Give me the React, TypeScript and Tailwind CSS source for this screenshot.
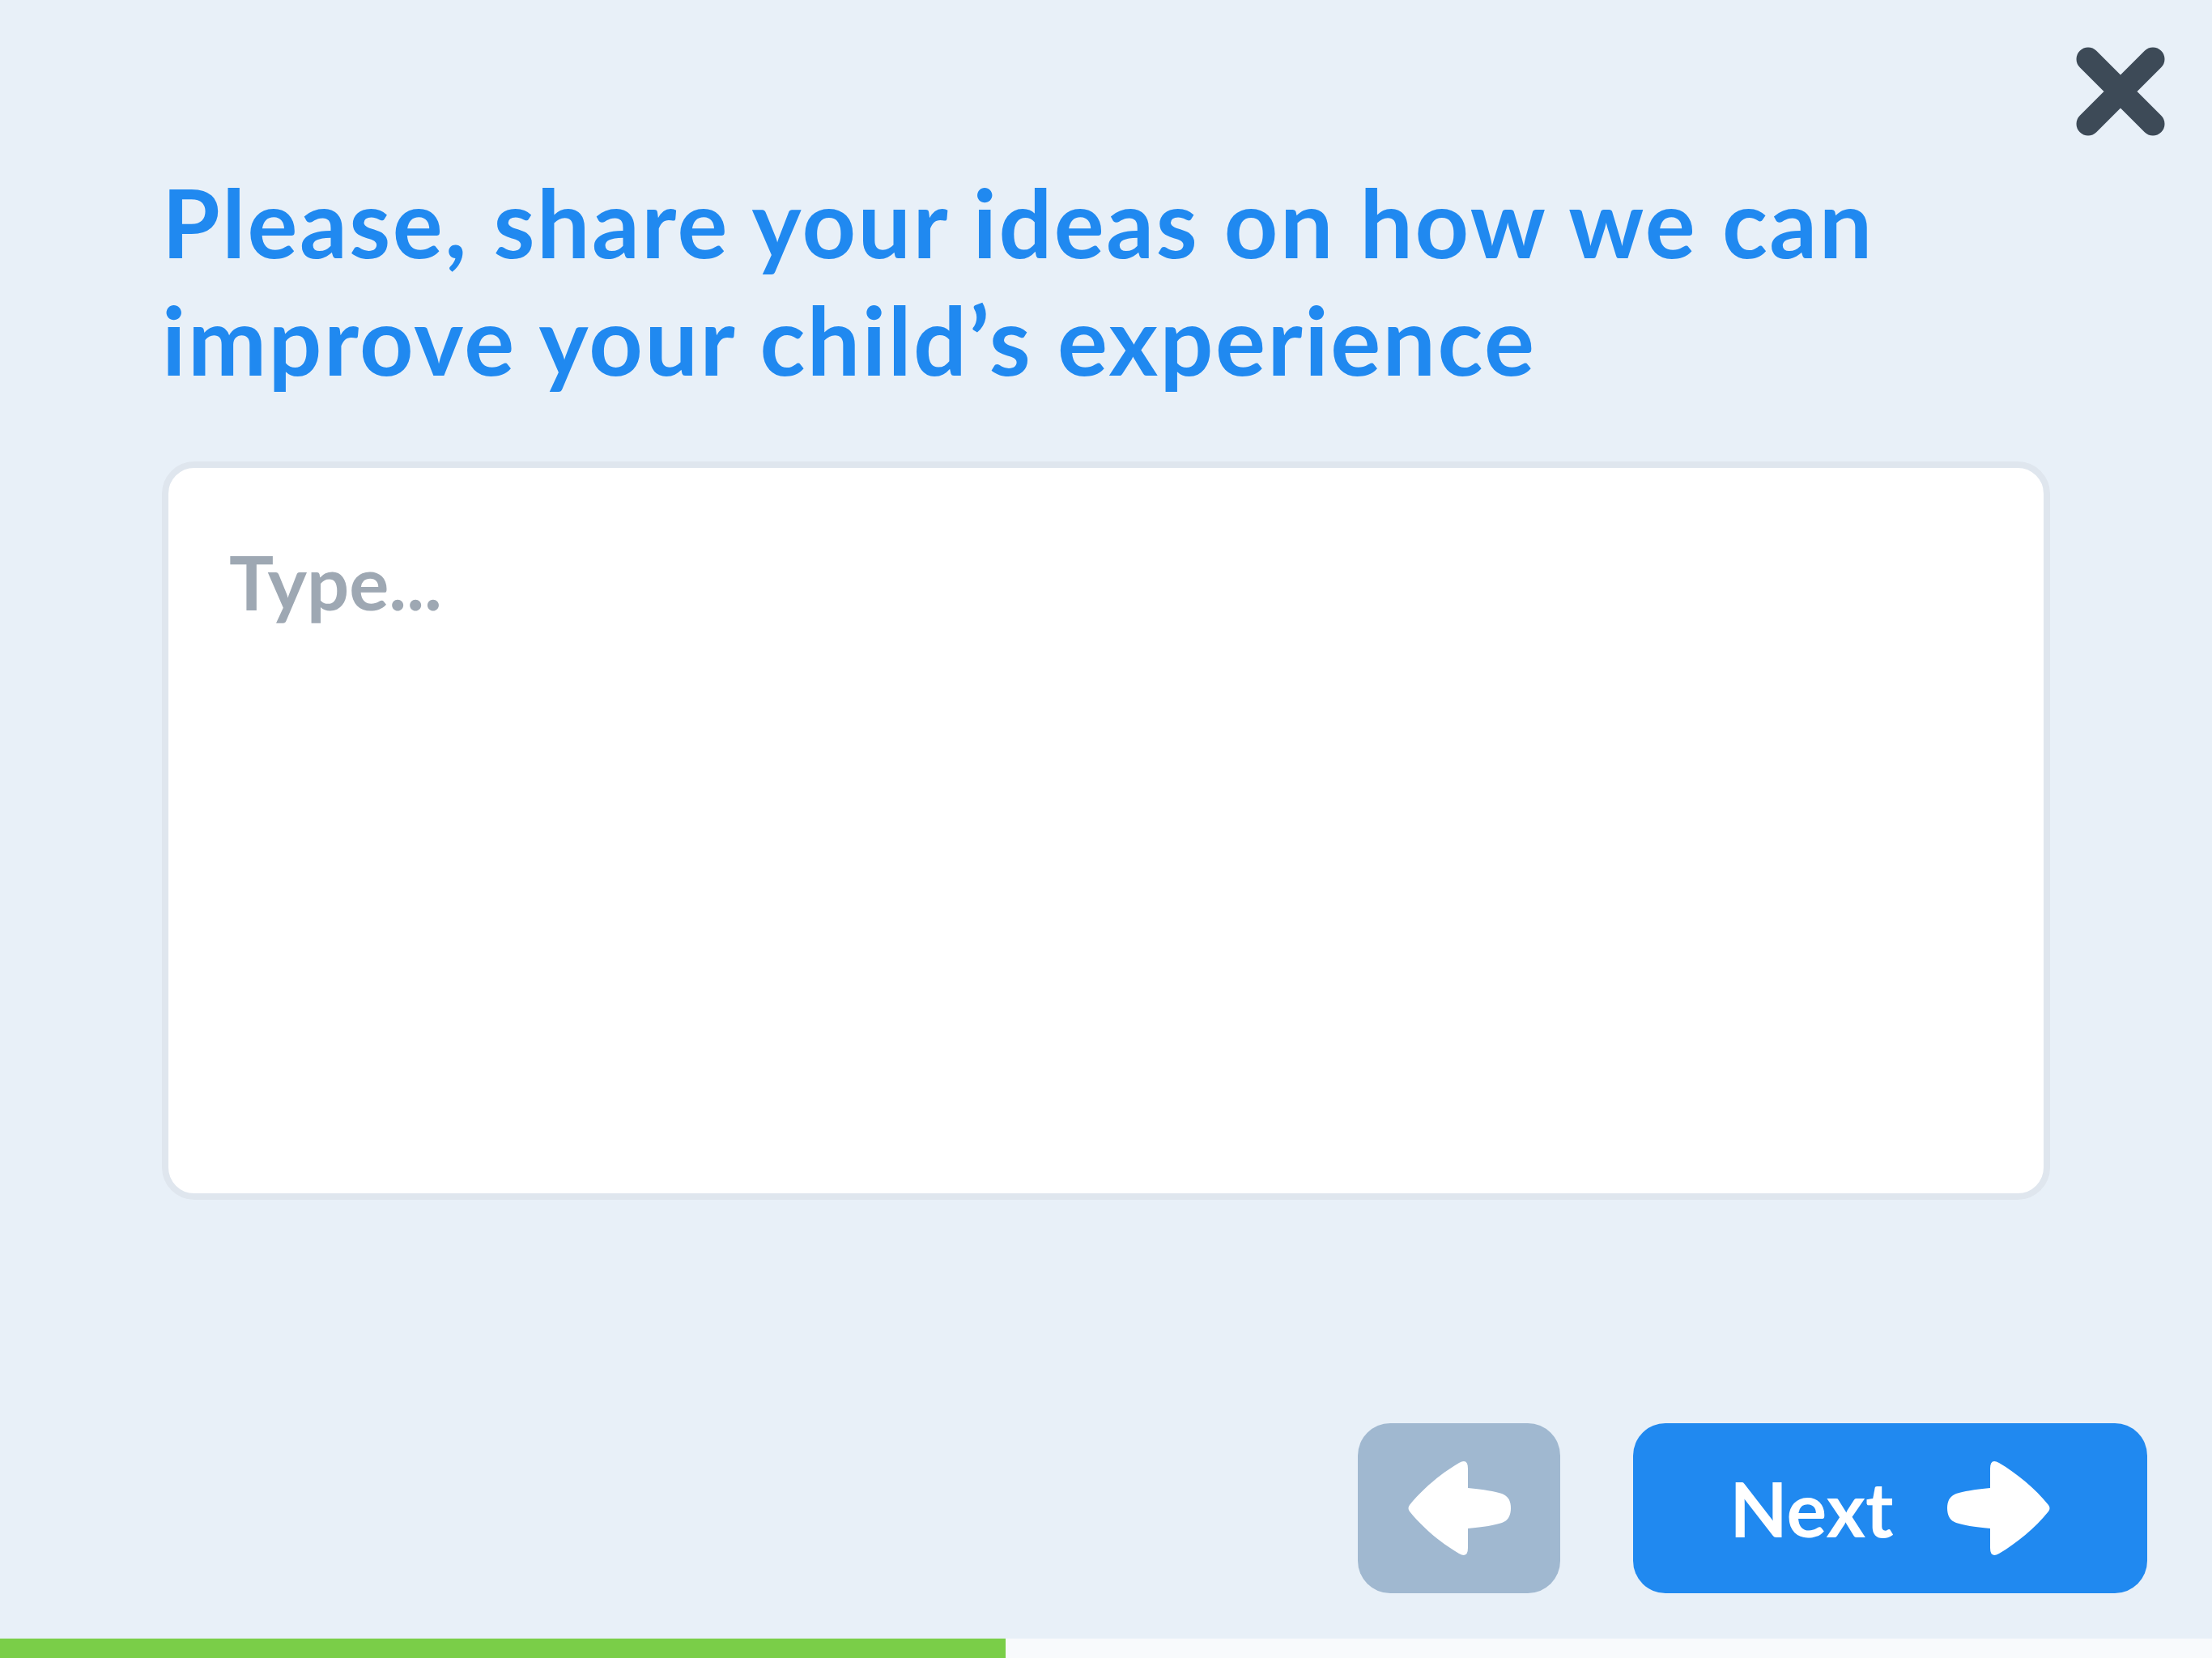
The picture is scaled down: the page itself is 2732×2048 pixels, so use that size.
import React from "react";

function Arrow({ dir }: { dir: "left" | "right" }) {
  return (
    <svg
      width="128"
      height="118"
      viewBox="0 0 128 118"
      className={dir === "right" ? "-scale-x-100" : ""}
    >
      <path
        d="M3 55 C20 34 42 16 64 3 Q75 -3 75 10 L75 34 C95 36 108 38 117 41 Q128 45 128 59 Q128 73 117 77 C108 80 95 82 75 84 L75 108 Q75 121 64 115 C42 102 20 84 3 63 Q0 59 3 55 Z"
        fill="#ffffff"
      />
    </svg>
  );
}

export default function App() {
  const font = { fontFamily: "Lato, 'Noto Sans', sans-serif" };

  return (
    <div className="relative flex h-[2048px] w-full flex-col bg-[#e8f0f8]" style={font}>
      <button className="absolute right-[58px] top-[58px]" aria-label="Close">
        <svg width="110" height="110" viewBox="0 0 110 110">
          <path
            d="M15 15 L95 95 M95 15 L15 95"
            stroke="#3d4a57"
            strokeWidth="29"
            strokeLinecap="round"
          />
        </svg>
      </button>

      <div className="flex flex-1 flex-col px-[200px] pt-[202px]">
        <h1 className="text-[116px] font-bold leading-[145px] tracking-[2.5px] text-[#2089f0]">
          Please, share your ideas on how we can
          <br />
          improve your child’s experience
        </h1>

        <textarea
          placeholder="Type..."
          className="mt-[78px] h-[912px] w-full resize-none rounded-[40px] border-8 border-[#dfe6ee] bg-white pl-[75px] pt-[86px] text-[92px] font-bold leading-[1.2] text-[#3d4a57] outline-none placeholder:text-[#9ea8b3]"
          style={font}
        />

        <div className="flex-1" />

        <div className="-mr-[120px] mb-[56px] flex justify-end gap-[90px]">
          <button className="flex h-[210px] w-[250px] items-center justify-center rounded-[40px] bg-[#a0b8d0]">
            <Arrow dir="left" />
          </button>
          <button className="flex h-[210px] w-[635px] items-center justify-center gap-[66px] rounded-[40px] bg-[#2089f0]">
            <span className="text-[93px] font-bold leading-none text-white">Next</span>
            <Arrow dir="right" />
          </button>
        </div>
      </div>

      <div className="flex h-[24px] w-full">
        <div className="h-full w-[1242px] bg-[#7ace48]" />
        <div className="h-full flex-1 bg-[#f8fafc]" />
      </div>
    </div>
  );
}
